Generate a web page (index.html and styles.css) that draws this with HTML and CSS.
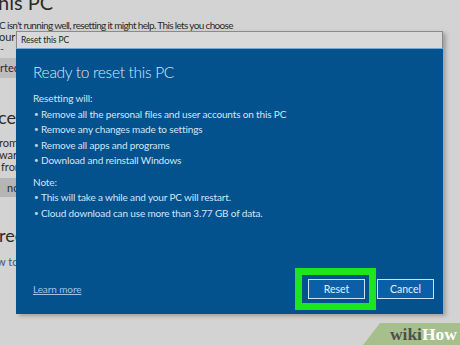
FILE: index.html
```html
<!DOCTYPE html>
<html lang="en">
<head>
    <meta charset="UTF-8">
    <title>Reset this PC</title>
    <link rel="stylesheet" href="styles.css">
</head>
<body>
    <div class="settings">
        <div class="s-title">his PC</div>
        <div class="s-text s-intro">C isn't running well, resetting it might help. This lets you choose</div>
        <div class="s-text">our</div>
        <div class="s-text s-dash">-</div>
        <div class="s-btn">rted</div>
        <div class="s-head s-head-1">ced</div>
        <div class="s-text s-para">rom</div>
        <div class="s-text">ware</div>
        <div class="s-text s-indent">fron</div>
        <div class="s-btn s-btn-2">now</div>
        <div class="s-head s-head-2">reco</div>
        <div class="s-link">w to</div>
    </div>

    <div class="dialog">
        <div class="titlebar">Reset this PC</div>
        <div class="panel">
            <h1>Ready to reset this PC</h1>
            <p class="label">Resetting will:</p>
            <ul>
                <li>Remove all the personal files and user accounts on this PC</li>
                <li>Remove any changes made to settings</li>
                <li>Remove all apps and programs</li>
                <li>Download and reinstall Windows</li>
            </ul>
            <p class="label note">Note:</p>
            <ul>
                <li>This will take a while and your PC will restart.</li>
                <li>Cloud download can use more than 3.77 GB of data.</li>
            </ul>
            <div class="footer">
                <a class="learn" href="#">Learn more</a>
                <div class="buttons">
                    <button class="btn btn-reset">Reset</button>
                    <button class="btn">Cancel</button>
                </div>
            </div>
        </div>
    </div>

    <div class="wikihow"><span class="wiki">wiki</span><span class="how">How</span></div>
</body>
</html>
```

FILE: styles.css
```css
body {
    margin: 0;
    width: 460px;
    height: 345px;
    overflow: hidden;
    position: relative;
    background-color: #d3d3d3;
    font-family: Lato, 'Open Sans', sans-serif;
    color: #2b2b2b;
}

.settings {
    white-space: nowrap;
}

.s-title {
    font-size: 20px;
    line-height: 24px;
    margin-top: -10px;
    margin-left: -2px;
}

.s-text {
    font-size: 11px;
    line-height: 12px;
    margin-left: -1px;
}

.s-intro {
    margin-top: 5px;
    font-size: 10px;
    letter-spacing: -0.65px;
}

.s-dash {
    margin-left: 0;
    color: #555;
}

.s-btn {
    width: 40px;
    height: 20px;
    margin-top: 3px;
    margin-left: -17px;
    background-color: #bdbdbd;
    font-size: 11px;
    line-height: 20px;
    padding-left: 17px;
    box-sizing: border-box;
}

.s-head {
    font-size: 18px;
    line-height: 22px;
    margin-left: -2px;
}

.s-head-1 {
    margin-top: 28px;
}

.s-para {
    margin-top: 9px;
}

.s-indent {
    margin-left: 1px;
}

.s-btn-2 {
    margin-top: 5px;
    height: 19px;
    line-height: 19px;
    margin-left: -20px;
    background-color: #b5b5b5;
    padding-left: 27px;
}

.s-head-2 {
    margin-top: 27px;
    margin-left: -1px;
}

.s-link {
    margin-top: 10px;
    font-size: 11px;
    line-height: 12px;
    margin-left: -3px;
    color: #2d5b88;
}

/* dialog sits over the settings page */
.dialog {
    position: absolute;
    left: 16px;
    top: 31px;
    width: 427px;
    height: 283px;
    display: flex;
    flex-direction: column;
    box-shadow: 3px 2px 4px rgba(0, 0, 0, 0.25);
}

.titlebar {
    height: 17px;
    box-sizing: border-box;
    border: 1px solid #8a8a8a;
    border-bottom: none;
    background-color: #d9d9d9;
    font-size: 8.5px;
    letter-spacing: -0.1px;
    line-height: 17px;
    padding-left: 4px;
    color: #222;
}

.panel {
    flex: 1;
    display: flex;
    flex-direction: column;
    background-color: #03528e;
    border-top: 1px solid #7aa8d2;
    padding: 11px 9px 15px 17px;
    color: #d3e5f6;
}

h1 {
    margin: 0;
    font-size: 15.5px;
    font-weight: 300;
    letter-spacing: -0.3px;
    line-height: 24px;
    color: #d6e8f8;
}

.label {
    margin: 7px 0 0;
    font-size: 10px;
    letter-spacing: -0.1px;
    line-height: 15.5px;
}

.note {
    margin-top: 6px;
}

ul {
    list-style: none;
    margin: 0;
    padding: 0;
}

li {
    font-size: 10px;
    letter-spacing: -0.15px;
    line-height: 15.5px;
    padding-left: 8px;
    position: relative;
}

li::before {
    content: "\2022";
    position: absolute;
    left: 1px;
    font-size: 8px;
    color: #b9d4ee;
}

.footer {
    margin-top: auto;
    display: flex;
    align-items: center;
    justify-content: space-between;
}

.learn {
    font-size: 10px;
    letter-spacing: -0.1px;
    color: #9cc4ea;
    text-decoration: underline;
}

.buttons {
    display: flex;
    gap: 12px;
}

.btn {
    width: 57px;
    height: 20px;
    padding: 0;
    box-sizing: border-box;
    background-color: #0b5fa7;
    border: 1.5px solid #cfe1f2;
    color: #e6f0fa;
    font-family: Lato, 'Open Sans', sans-serif;
    font-size: 10.5px;
}

.btn-reset {
    position: relative;
}

/* green highlight added around the button */
.btn-reset::after {
    content: "";
    position: absolute;
    left: -14px;
    right: -12px;
    top: -12px;
    bottom: -12px;
    border: 7px solid #1fe41f;
}

.wikihow {
    position: absolute;
    right: 0;
    bottom: 0;
    width: 97px;
    height: 22px;
    padding-right: 3px;
    box-sizing: border-box;
    background-color: #a6bf8c;
    clip-path: polygon(17px 0, 100% 0, 100% 100%, 0 100%);
    font-family: 'Liberation Serif', 'DejaVu Serif', serif;
    font-weight: bold;
    font-size: 17.5px;
    line-height: 22px;
    text-align: right;
}

.wiki {
    color: #4f4f4f;
}

.how {
    color: #ffffff;
}
```
